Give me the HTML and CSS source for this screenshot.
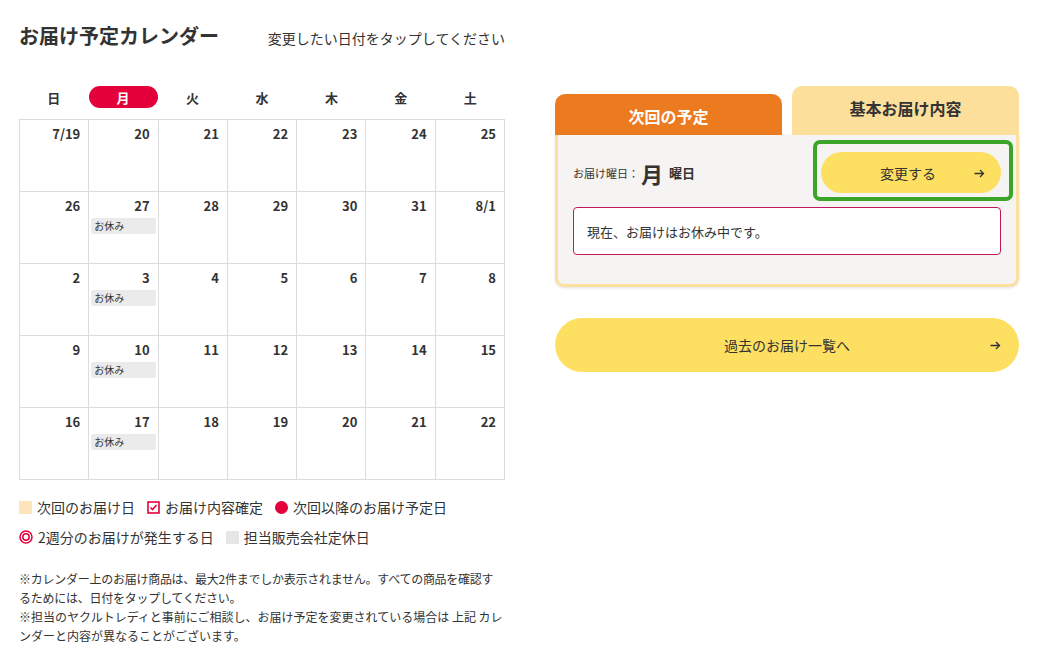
FILE: index.html
```html
<!DOCTYPE html>
<html lang="ja">
<head>
  <meta charset="UTF-8">
  <title>お届け予定カレンダー</title>
  <link rel="stylesheet" href="styles.css">
</head>
<body>
  <div class="page">
    <div class="left">
      <div class="head">
        <h1 class="title">お届け予定カレンダー</h1>
        <div class="hint">変更したい日付をタップしてください</div>
      </div>

      <div class="weekdays">
        <div class="wd">日</div>
        <div class="wd"><span class="wd-on">月</span></div>
        <div class="wd">火</div>
        <div class="wd">水</div>
        <div class="wd">木</div>
        <div class="wd">金</div>
        <div class="wd">土</div>
      </div>

      <div class="calendar">
        <div class="cell"><div class="num">7/19</div></div>
        <div class="cell"><div class="num">20</div></div>
        <div class="cell"><div class="num">21</div></div>
        <div class="cell"><div class="num">22</div></div>
        <div class="cell"><div class="num">23</div></div>
        <div class="cell"><div class="num">24</div></div>
        <div class="cell"><div class="num">25</div></div>

        <div class="cell"><div class="num">26</div></div>
        <div class="cell"><div class="num">27</div><div class="off">お休み</div></div>
        <div class="cell"><div class="num">28</div></div>
        <div class="cell"><div class="num">29</div></div>
        <div class="cell"><div class="num">30</div></div>
        <div class="cell"><div class="num">31</div></div>
        <div class="cell"><div class="num">8/1</div></div>

        <div class="cell"><div class="num">2</div></div>
        <div class="cell"><div class="num">3</div><div class="off">お休み</div></div>
        <div class="cell"><div class="num">4</div></div>
        <div class="cell"><div class="num">5</div></div>
        <div class="cell"><div class="num">6</div></div>
        <div class="cell"><div class="num">7</div></div>
        <div class="cell"><div class="num">8</div></div>

        <div class="cell"><div class="num">9</div></div>
        <div class="cell"><div class="num">10</div><div class="off">お休み</div></div>
        <div class="cell"><div class="num">11</div></div>
        <div class="cell"><div class="num">12</div></div>
        <div class="cell"><div class="num">13</div></div>
        <div class="cell"><div class="num">14</div></div>
        <div class="cell"><div class="num">15</div></div>

        <div class="cell"><div class="num">16</div></div>
        <div class="cell"><div class="num">17</div><div class="off">お休み</div></div>
        <div class="cell"><div class="num">18</div></div>
        <div class="cell"><div class="num">19</div></div>
        <div class="cell"><div class="num">20</div></div>
        <div class="cell"><div class="num">21</div></div>
        <div class="cell"><div class="num">22</div></div>
      </div>

      <div class="legend">
        <div class="legend-row">
          <span class="item"><span class="sq sq-next"></span>次回のお届け日</span>
          <span class="item">
            <svg class="ico" width="13" height="13" viewBox="0 0 13 13"><rect x="1" y="1" width="11" height="11" fill="#fff" stroke="#e4003b" stroke-width="1.6"/><path d="M3.5 6.5l2 2 4-4.5" fill="none" stroke="#e4003b" stroke-width="1.6"/></svg>お届け内容確定
          </span>
          <span class="item"><span class="dot"></span>次回以降のお届け予定日</span>
        </div>
        <div class="legend-row">
          <span class="item">
            <svg class="ico" width="14" height="14" viewBox="0 0 14 14"><circle cx="7" cy="7" r="6" fill="none" stroke="#e4003b" stroke-width="1.5"/><circle cx="7" cy="7" r="3.2" fill="none" stroke="#e4003b" stroke-width="1.5"/></svg>2週分のお届けが発生する日
          </span>
          <span class="item"><span class="sq sq-holiday"></span>担当販売会社定休日</span>
        </div>
      </div>

      <div class="notes">
        <p class="tight">※カレンダー上のお届け商品は、最大2件までしか表示されません。すべての商品を確認するためには、日付をタップしてください。</p>
        <p>※担当のヤクルトレディと事前にご相談し、お届け予定を変更されている場合は 上記 カレンダーと内容が異なることがございます。</p>
      </div>
    </div>

    <div class="right">
      <div class="tabs">
        <div class="tab tab-next">次回の予定</div>
        <div class="tab tab-basic">基本お届け内容</div>
      </div>
      <div class="panel">
        <div class="panel-top">
          <div class="dow">
            <span class="dow-label">お届け曜日：</span>
            <span class="dow-day">月</span>
            <span class="dow-suffix">曜日</span>
          </div>
          <div class="change-wrap">
            <a class="btn btn-change" href="#">
              <span>変更する</span>
              <svg class="arrow" width="11" height="9" viewBox="0 0 11 9"><path d="M0.5 4.5h9M6 1l3.5 3.5L6 8" fill="none" stroke="#333" stroke-width="1.3"/></svg>
            </a>
            <div class="focus-ring"></div>
          </div>
        </div>
        <div class="notice">現在、お届けはお休み中です。</div>
      </div>

      <a class="btn btn-history" href="#">
        <span>過去のお届け一覧へ</span>
        <svg class="arrow" width="11" height="9" viewBox="0 0 11 9"><path d="M0.5 4.5h9M6 1l3.5 3.5L6 8" fill="none" stroke="#333" stroke-width="1.3"/></svg>
      </a>
    </div>
  </div>
</body>
</html>
```

FILE: styles.css
```css
body {
  margin: 0;
  background: #fff;
  color: #333;
  font-family: "Noto Sans CJK JP", "Noto Sans", sans-serif;
}
.page {
  display: flex;
  gap: 50px;
  padding: 0 0 0 19px;
}
.left {
  width: 486px;
}
.head {
  display: flex;
  align-items: baseline;
  padding-top: 22px;
  height: 64px;
  box-sizing: border-box;
  white-space: nowrap;
}
.title {
  margin: 0;
  font-size: 20px;
  font-weight: bold;
  width: 250px;
  line-height: 28px;
}
.hint {
  font-size: 14px;
}
.weekdays {
  display: grid;
  grid-template-columns: repeat(7, 1fr);
  height: 22px;
  margin: 22px 0 11px;
}
.wd {
  display: flex;
  align-items: center;
  justify-content: center;
  font-size: 13px;
  font-weight: bold;
}
.wd-on {
  display: flex;
  align-items: center;
  justify-content: center;
  width: 69px;
  height: 22px;
  border-radius: 11px;
  background: #e4003b;
  color: #fff;
}
.calendar {
  display: grid;
  grid-template-columns: repeat(7, 1fr);
  border-top: 1px solid #dcdcdc;
  border-left: 1px solid #dcdcdc;
}
.cell {
  height: 72px;
  box-sizing: border-box;
  border-right: 1px solid #dcdcdc;
  border-bottom: 1px solid #dcdcdc;
  padding: 5px 2px 0;
}
.num {
  text-align: right;
  padding-right: 6px;
  font-size: 13px;
  font-weight: bold;
  line-height: 18px;
}
.off {
  margin-top: 3px;
  height: 16px;
  line-height: 16px;
  background: #ebebeb;
  border-radius: 2px;
  padding-left: 3px;
  font-size: 10px;
}
.legend {
  margin-top: 12px;
  font-size: 14px;
}
.legend-row {
  display: flex;
  gap: 12px;
  height: 30px;
  align-items: center;
}
.item {
  display: flex;
  align-items: center;
  gap: 5px;
}
.sq {
  width: 13px;
  height: 13px;
}
.sq-next {
  background: #fde4bb;
}
.sq-holiday {
  background: #e6e6e6;
}
.dot {
  width: 13px;
  height: 13px;
  border-radius: 50%;
  background: #e4003b;
}
.notes {
  margin-top: 17px;
  font-size: 12px;
  line-height: 19px;
}
.notes p {
  margin: 0;
}
.notes .tight {
  letter-spacing: -0.26px;
}
.right {
  width: 464px;
  padding-top: 86px;
}
.tabs {
  display: flex;
  align-items: flex-end;
  gap: 10px;
}
.tab {
  flex: 1;
  display: flex;
  align-items: center;
  justify-content: center;
  font-size: 16px;
  font-weight: bold;
  border-radius: 10px 10px 0 0;
}
.tab-next {
  height: 41px;
  background: #ec7a1f;
  color: #fff;
  padding-top: 2px;
  box-sizing: border-box;
}
.tab-basic {
  height: 49px;
  background: #fddf9c;
  padding-bottom: 5px;
  box-sizing: border-box;
}
.panel {
  background: #f6f4f2;
  border: 3px solid #fde0a0;
  border-top: none;
  border-radius: 0 0 9px 9px;
  padding: 17px 15px 29px;
  box-shadow: 0 1px 3px rgba(0, 0, 0, 0.12);
}
.panel-top {
  display: flex;
  align-items: center;
  justify-content: space-between;
}
.dow {
  display: flex;
  align-items: center;
}
.dow-label {
  font-size: 11px;
}
.dow-day {
  font-size: 22px;
  font-weight: bold;
  margin: 0 6px 0 2px;
}
.dow-suffix {
  font-size: 13px;
  font-weight: bold;
}
.change-wrap {
  position: relative;
}
.btn {
  display: flex;
  align-items: center;
  justify-content: center;
  position: relative;
  background: #fde062;
  color: #333;
  text-decoration: none;
  font-size: 14px;
}
.btn .arrow {
  position: absolute;
  right: 16px;
  top: 50%;
  margin-top: -4px;
}
.btn-change {
  width: 180px;
  height: 41px;
  border-radius: 21px;
}
.btn-change span {
  margin-left: -6px;
}
.focus-ring {
  position: absolute;
  left: -8px;
  top: -12px;
  right: -12px;
  bottom: -8px;
  border: 4px solid #3aa528;
  border-radius: 7px;
}
.notice {
  margin-top: 14px;
  background: #fff;
  border: 1px solid #c2185b;
  border-radius: 4px;
  height: 48px;
  box-sizing: border-box;
  padding-left: 13px;
  display: flex;
  align-items: center;
  font-size: 13px;
}
.btn-history {
  margin-top: 31px;
  height: 54px;
  border-radius: 27px;
}
.btn-history .arrow {
  right: 18px;
}
```
